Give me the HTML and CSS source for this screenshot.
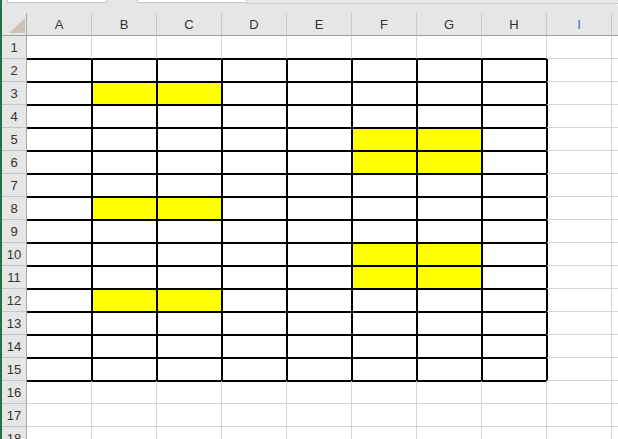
FILE: index.html
```html
<!DOCTYPE html>
<html lang="ja">
<head>
    <meta charset="UTF-8">
    <meta name="viewport" content="width=device-width, initial-scale=1.0">
    <title>Sheet1</title>
    <link rel="stylesheet" href="styles.css">
</head>
<body>
<div class="sheet">

    <!-- haut : onglets -->
    <div class="tabs">
        <div class="tab tab1"></div>
        <div class="tab tab2"></div>
        <div class="rule"></div>
    </div>

    <table class="grille">
        <tr class="entete">
            <th class="coin">
                <svg width="24" height="22" viewBox="0 0 24 22"><polygon points="23,5 7,20 23,20" fill="#cdc3b7"/></svg>
            </th>
            <th>A</th><th>B</th><th>C</th><th>D</th><th>E</th><th>F</th><th>G</th><th>H</th><th class="bleu">I</th><th></th>
        </tr>
        <tr><th>1</th><td class="bb"></td><td class="bb"></td><td class="bb"></td><td class="bb"></td><td class="bb"></td><td class="bb"></td><td class="bb"></td><td class="bb"></td><td></td><td></td></tr>
        <tr><th>2</th><td class="b"></td><td class="b"></td><td class="b"></td><td class="b"></td><td class="b"></td><td class="b"></td><td class="b"></td><td class="b"></td><td class="l"></td><td></td></tr>
        <tr><th>3</th><td class="b"></td><td class="b y"></td><td class="b y"></td><td class="b"></td><td class="b"></td><td class="b"></td><td class="b"></td><td class="b"></td><td class="l"></td><td></td></tr>
        <tr><th>4</th><td class="b"></td><td class="b"></td><td class="b"></td><td class="b"></td><td class="b"></td><td class="b"></td><td class="b"></td><td class="b"></td><td class="l"></td><td></td></tr>
        <tr><th>5</th><td class="b"></td><td class="b"></td><td class="b"></td><td class="b"></td><td class="b"></td><td class="b y"></td><td class="b y"></td><td class="b"></td><td class="l"></td><td></td></tr>
        <tr><th>6</th><td class="b"></td><td class="b"></td><td class="b"></td><td class="b"></td><td class="b"></td><td class="b y"></td><td class="b y"></td><td class="b"></td><td class="l"></td><td></td></tr>
        <tr><th>7</th><td class="b"></td><td class="b"></td><td class="b"></td><td class="b"></td><td class="b"></td><td class="b"></td><td class="b"></td><td class="b"></td><td class="l"></td><td></td></tr>
        <tr><th>8</th><td class="b"></td><td class="b y"></td><td class="b y"></td><td class="b"></td><td class="b"></td><td class="b"></td><td class="b"></td><td class="b"></td><td class="l"></td><td></td></tr>
        <tr><th>9</th><td class="b"></td><td class="b"></td><td class="b"></td><td class="b"></td><td class="b"></td><td class="b"></td><td class="b"></td><td class="b"></td><td class="l"></td><td></td></tr>
        <tr><th>10</th><td class="b"></td><td class="b"></td><td class="b"></td><td class="b"></td><td class="b"></td><td class="b y"></td><td class="b y"></td><td class="b"></td><td class="l"></td><td></td></tr>
        <tr><th>11</th><td class="b"></td><td class="b"></td><td class="b"></td><td class="b"></td><td class="b"></td><td class="b y"></td><td class="b y"></td><td class="b"></td><td class="l"></td><td></td></tr>
        <tr><th>12</th><td class="b"></td><td class="b y"></td><td class="b y"></td><td class="b"></td><td class="b"></td><td class="b"></td><td class="b"></td><td class="b"></td><td class="l"></td><td></td></tr>
        <tr><th>13</th><td class="b"></td><td class="b"></td><td class="b"></td><td class="b"></td><td class="b"></td><td class="b"></td><td class="b"></td><td class="b"></td><td class="l"></td><td></td></tr>
        <tr><th>14</th><td class="b"></td><td class="b"></td><td class="b"></td><td class="b"></td><td class="b"></td><td class="b"></td><td class="b"></td><td class="b"></td><td class="l"></td><td></td></tr>
        <tr><th>15</th><td class="b"></td><td class="b"></td><td class="b"></td><td class="b"></td><td class="b"></td><td class="b"></td><td class="b"></td><td class="b"></td><td class="l"></td><td></td></tr>
        <tr><th>16</th><td class="t"></td><td class="t"></td><td class="t"></td><td class="t"></td><td class="t"></td><td class="t"></td><td class="t"></td><td class="t"></td><td></td><td></td></tr>
        <tr><th>17</th><td></td><td></td><td></td><td></td><td></td><td></td><td></td><td></td><td></td><td></td></tr>
        <tr><th>18</th><td></td><td></td><td></td><td></td><td></td><td></td><td></td><td></td><td></td><td></td></tr>
    </table>

</div>
</body>
</html>
```

FILE: styles.css
```css
body {
    margin: 0;
    background: #fff;
    font-family: "Liberation Sans", Arial, "Noto Sans CJK JP", sans-serif;
    overflow: hidden;
}

/* conteneur de la feuille, ligne verte a gauche */
.sheet {
    border-left: 2px solid #217346;
    height: 439px;
    overflow: hidden;
}

/* bande des onglets */
.tabs {
    display: flex;
    align-items: flex-start;
    height: 13px;
    background: #e6e6e6;
}

.tab {
    height: 2px;
    background: #fff;
    border: 1px solid #c6c6c6;
    border-top: none;
}

.tab1 {
    margin-left: 5px;
    width: 98px;
}

.tab2 {
    margin-left: 30px;
    width: 108px;
}

.rule {
    flex: 1;
    height: 3px;
    border-bottom: 1px dotted #b4b4b4;
}

/* grille */
.grille {
    border-collapse: separate;
    border-spacing: 0;
    table-layout: fixed;
    width: 675px;
}

.grille tr {
    height: 23px;
}

.grille td {
    box-sizing: border-box;
    width: 65px;
    height: 23px;
    padding: 0;
    border-right: 1px solid #d4d4d4;
    border-bottom: 1px solid #d4d4d4;
}

.grille th {
    box-sizing: border-box;
    padding: 0;
    height: 23px;
    background: #e6e6e6;
    color: #333;
    font-weight: normal;
    font-size: 13px;
    text-align: center;
    vertical-align: middle;
}

/* entete des colonnes */
.entete th {
    width: 65px;
    border-right: 1px solid #cacaca;
    border-bottom: 1px solid #9e9e9e;
}

.entete th.coin {
    width: 25px;
    border-right: 1px solid #a8a8a8;
}

.coin svg {
    display: block;
}

.bleu {
    color: #2f6fba !important;
}

/* numeros de ligne */
.grille tr th:first-child {
    width: 25px;
    border-right: 1px solid #a8a8a8;
    border-bottom: 1px solid #c4c4c4;
}

.grille .entete th:first-child {
    border-bottom: 1px solid #9e9e9e;
}

/* bordures noires du tableau */
.grille td.bb {
    border-bottom-color: #000;
}

.grille td.b {
    border-right-color: #000;
    border-bottom-color: #000;
    box-shadow: inset 1px 1px 0 #000;
}

/* la colonne A touche l'entete : pas de trait a gauche */
.grille td.b:nth-child(2) {
    box-shadow: inset 0 1px 0 #000;
}

.grille td.l {
    box-shadow: inset 1px 0 0 #000;
}

.grille td.t {
    box-shadow: inset 0 1px 0 #000;
}

.grille td.y {
    background: #ffff00;
}
```
